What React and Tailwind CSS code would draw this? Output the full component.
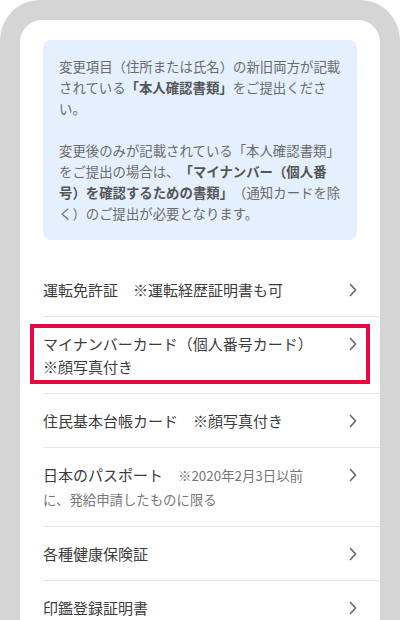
const font = '[font-family:"Noto_Sans_CJK_JP","Noto_Sans",sans-serif]';

const rows = [
  { key: 'license', title: '運転免許証　※運転経歴証明書も可' },
  { key: 'mynumber', title: 'マイナンバーカード（個人番号カード）', sub: '※顔写真付き', highlight: true },
  { key: 'juki', title: '住民基本台帳カード　※顔写真付き' },
  { key: 'passport', title: '日本のパスポート　', note: '※2020年2月3日以前に、発給申請したものに限る' },
  { key: 'insurance', title: '各種健康保険証' },
  { key: 'seal', title: '印鑑登録証明書' },
];

function Chevron() {
  return (
    <svg width="8" height="14" viewBox="0 0 8 14" fill="none" className="shrink-0 mt-[5px]">
      <path d="M1.5 1.5 L6.5 7 L1.5 12.5" stroke="#666" strokeWidth="1.6" strokeLinecap="round" strokeLinejoin="round" />
    </svg>
  );
}

export default function App() {
  return (
    <div className={`w-[400px] h-[620px] overflow-hidden bg-white ${font} [text-spacing-trim:space-all]`}>
      <div className="h-full bg-[#d5d5d5] rounded-t-[40px] px-5 pt-5">
        <div className="h-full bg-white rounded-t-[22px] pl-[23px] pt-5">

          {/* notice */}
          <div className="mr-[23px] bg-[#e4f0fd] rounded-lg px-4 py-4 text-[13.4px] leading-[21px] text-[#6b6b6b]">
            <p>
              変更項目（住所または氏名）の新旧両方が記載されている
              <b className="font-bold text-[#555]">「本人確認書類」</b>
              をご提出ください。
            </p>
            <p className="mt-[21px]">
              変更後のみが記載されている「本人確認書類」をご提出の場合は、
              <b className="font-bold text-[#555]">「マイナンバー（個人番号）を確認するための書類」</b>
              （通知カードを除く）のご提出が必要となります。
            </p>
          </div>

          {/* document list */}
          <ul className="mt-[23px]">
            {rows.map((r) => (
              <li key={r.key} className="relative flex items-start gap-[30px] pr-[23px] py-[15px] border-b border-[#e6e6e6] last:border-b-0">
                <div className="flex-1 text-[15px] leading-[23px] text-[#3c3c3c]">
                  {r.title}
                  {r.note && <span className="text-[13.4px] text-[#777]">{r.note}</span>}
                  {r.sub && <><br />{r.sub}</>}
                </div>
                <Chevron />
                {r.highlight && (
                  <div className="absolute left-[-13px] right-[10px] top-[7px] bottom-[9px] border-4 border-[#e8073f] pointer-events-none" />
                )}
              </li>
            ))}
          </ul>
        </div>
      </div>
    </div>
  );
}
